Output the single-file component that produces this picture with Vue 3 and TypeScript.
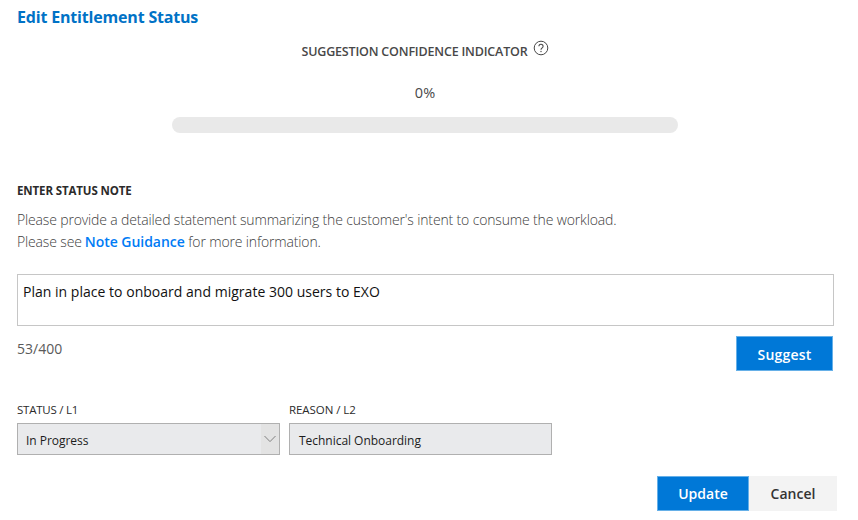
<script setup lang="ts">
import { computed, ref } from 'vue'

const confidence = ref<number>(0)
const note = ref<string>('Plan in place to onboard and migrate 300 users to EXO')
const maxLength = 400
const counter = computed<string>(() => `${note.value.length}/${maxLength}`)
</script>

<template>
  <main class="dialog">
    <h1 class="title">Edit Entitlement Status</h1>

    <section class="confidence">
      <div class="confidence-head">
        <h2>SUGGESTION CONFIDENCE INDICATOR</h2>
        <svg class="help" viewBox="0 0 16 16" fill="none" stroke="#484848">
          <circle cx="8" cy="8" r="6.8" />
          <path d="M5.9 6.3a2.1 2 0 1 1 3.3 1.6C8.4 8.5 8 8.9 8 9.8" stroke-width="1.1" />
          <circle cx="8" cy="11.5" r="0.7" fill="#484848" stroke="none" />
        </svg>
      </div>
      <div class="percent">{{ confidence }}%</div>
      <div class="track"><div class="fill" :style="{ width: confidence + '%' }"></div></div>
    </section>

    <h3 class="note-title">ENTER STATUS NOTE</h3>
    <p class="hint">
      Please provide a detailed statement summarizing the customer's intent to consume the workload.<br />
      Please see <a class="link">Note Guidance</a> for more information.
    </p>
    <textarea v-model="note" class="note" :maxlength="maxLength" spellcheck="false"></textarea>

    <div class="note-foot">
      <span class="counter">{{ counter }}</span>
      <button class="btn primary suggest">Suggest</button>
    </div>

    <div class="fields">
      <div class="field">
        <span class="label">STATUS / L1</span>
        <div class="box select">
          <span>In Progress</span>
          <span class="arrow">
            <svg viewBox="0 0 12 8" fill="none" stroke="#808080"><path d="M0.5 1 6 6.6 11.5 1" /></svg>
          </span>
        </div>
      </div>
      <div class="field">
        <span class="label reason">REASON / L2</span>
        <div class="box text"><span>Technical Onboarding</span></div>
      </div>
    </div>

    <div class="actions">
      <button class="btn primary update">Update</button>
      <button class="btn cancel">Cancel</button>
    </div>
  </main>
</template>

<style>
body { background: #fff; }
</style>

<style scoped>
.dialog {
  box-sizing: border-box;
  width: 858px;
  height: 520px;
  padding: 6px 25px 0 17px;
  overflow: hidden;
  font-family: "Open Sans", "Noto Sans", sans-serif;
  color: #484848;
}
h1, h2, h3, p { margin: 0; }
.title {
  font-size: 16px;
  line-height: 22px;
  font-weight: 700;
  letter-spacing: -0.18px;
  color: #0072c6;
}
.confidence {
  display: flex;
  flex-direction: column;
  align-items: center;
  margin-top: 15px;
}
.confidence-head {
  display: flex;
  align-items: flex-start;
  height: 18px;
  gap: 5px;
}
.confidence-head h2 {
  font-size: 12.5px;
  line-height: 18px;
  font-weight: 600;
  letter-spacing: -0.18px;
}
.help { width: 16px; height: 16px; margin-top: -3px; }
.percent { margin-top: 22px; font-size: 14.5px; line-height: 20px; }
.track {
  width: 506px;
  height: 16px;
  margin-top: 14px;
  border-radius: 8px;
  background: #e9e9e9;
  overflow: hidden;
}
.fill { height: 100%; background: #0078d7; }
.note-title {
  margin-top: 50px;
  font-size: 11.5px;
  line-height: 16px;
  font-weight: 700;
  letter-spacing: -0.12px;
  color: #2b2b2b;
}
.hint {
  margin-top: 10px;
  font-size: 14px;
  line-height: 22px;
  font-weight: 300;
  letter-spacing: -0.15px;
  white-space: nowrap;
  color: #404040;
}
.link { font-weight: 600; letter-spacing: -0.03px; margin-left: -0.5px; color: #007bf5; }
.note {
  display: block;
  box-sizing: border-box;
  width: 817px;
  height: 52px;
  margin: 21px 0 0;
  padding: 7px 5px;
  border: 1px solid #c6c6c6;
  border-radius: 0;
  outline: none;
  resize: none;
  overflow: hidden;
  background: #fff;
  font: 400 14px/20px "Open Sans", "Noto Sans", sans-serif;
  letter-spacing: 0.02px;
  color: #111;
}
.note-foot {
  display: flex;
  justify-content: space-between;
  align-items: flex-start;
  margin-top: 10px;
}
.counter { margin-top: 3px; font-size: 14px; line-height: 20px; color: #5a5a5a; }
.btn {
  box-sizing: border-box;
  height: 35px;
  padding: 2px 0 0;
  border: 0;
  font: 600 14px/20px "Open Sans", "Noto Sans", sans-serif;
}
.primary { border: 1px solid #66b0e8; background: #0078d7; color: #fff; }
.suggest { width: 97px; letter-spacing: 0.2px; }
.fields { display: flex; gap: 9px; margin-top: 31px; }
.field { width: 263px; }
.label {
  display: block;
  margin-bottom: 5px;
  font-size: 11.5px;
  line-height: 16px;
  letter-spacing: -0.25px;
  color: #2b2b2b;
}
.reason { letter-spacing: -0.07px; }
.box {
  box-sizing: border-box;
  display: flex;
  align-items: center;
  justify-content: space-between;
  height: 32px;
  padding-left: 8px;
  border: 1px solid #b0b0b0;
  background: #e9eaec;
  font-size: 12px;
  letter-spacing: -0.03px;
  color: #1c1c1c;
}
.box > span:first-child { line-height: 18px; padding-top: 3px; }
.text { padding-left: 9px; }
.arrow {
  display: flex;
  align-items: center;
  justify-content: center;
  width: 18px;
  height: 100%;
  background: #e3e3e3;
}
.arrow svg { width: 12px; height: 8px; }
.actions { display: flex; justify-content: flex-end; margin: 21px -4px 0 0; }
.actions .btn { padding-top: 0; }
.update { width: 92px; }
.cancel { width: 88px; background: #f3f3f3; color: #333; }
</style>
